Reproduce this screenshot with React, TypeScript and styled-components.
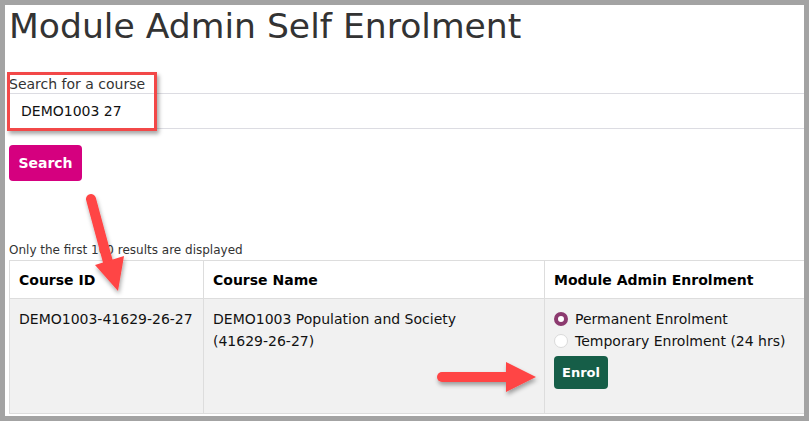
import styled, { createGlobalStyle } from 'styled-components';

const GlobalStyle = createGlobalStyle`
  html, body {
    margin: 0;
    padding: 0;
    background: #a3a3a3;
  }
  body {
    font-family: "DejaVu Sans", Verdana, sans-serif;
  }
`

const Frame = styled.div`
  width: 809px;
  height: 421px;
  box-sizing: border-box;
  padding: 5px 5px 5px 5px;
`

const Window = styled.div`
  position: relative;
  height: 411px;
  background: #ffffff;
  overflow: hidden;
  padding-left: 4px;
  box-sizing: border-box;
`

const Title = styled.h1`
  margin: 0;
  font-size: 34.6px;
  line-height: 42px;
  font-weight: normal;
  color: #333333;
`

const Label = styled.label`
  display: block;
  margin-top: 29px;
  font-size: 14px;
  line-height: 17px;
  color: #333333;
`

const SearchInput = styled.div`
  height: 36px;
  box-sizing: border-box;
  border-top: 1px solid #dcdce2;
  border-bottom: 1px solid #dcdce2;
  border-left: 1px solid #dcdce2;
  padding-left: 11px;
  display: flex;
  align-items: center;
  font-size: 14px;
  color: #111111;
`

const Button = styled.button<{ $bg: string }>`
  display: block;
  border: none;
  border-radius: 4px;
  background: ${p => p.$bg};
  color: #ffffff;
  font-family: "DejaVu Sans", Verdana, sans-serif;
  font-weight: bold;
  padding: 0;
`

const SearchButton = styled(Button)`
  margin-top: 16px;
  width: 73px;
  height: 36px;
  font-size: 14px;
`

const EnrolButton = styled(Button)`
  margin-top: 4px;
  width: 54px;
  height: 33px;
  font-size: 13px;
`

const Notice = styled.div`
  margin-top: 62px;
  font-size: 12px;
  line-height: 15px;
  color: #333333;
`

const Table = styled.table`
  margin-top: 2px;
  width: 800px;
  border-collapse: collapse;
  table-layout: fixed;
  font-size: 14px;
  color: #111111;
`

const Th = styled.th<{ $w: number }>`
  width: ${p => p.$w}px;
  height: 38px;
  box-sizing: border-box;
  padding: 0 9px;
  text-align: left;
  font-weight: bold;
  color: #000000;
  background: #ffffff;
  border: 1px solid #dddddd;
`

const Td = styled.td`
  height: 115px;
  box-sizing: border-box;
  padding: 9px 9px;
  vertical-align: top;
  line-height: 22px;
  background: #f1f1f1;
  border: 1px solid #dddddd;
`

const Code = styled.span`
  white-space: nowrap;
`

const RadioRow = styled.div`
  display: flex;
  align-items: center;
  gap: 7px;
  height: 22px;
`

const Radio = styled.span<{ $checked?: boolean }>`
  width: 14px;
  height: 14px;
  box-sizing: border-box;
  border-radius: 50%;
  background: #ffffff;
  border: ${p => (p.$checked ? '4px solid #8c3a6f' : '1px solid #dadada')};
`

const RedBox = styled.div`
  position: absolute;
  left: 2px;
  top: 67px;
  width: 150px;
  height: 59px;
  box-sizing: border-box;
  border: 3px solid #f24848;
  box-shadow: 2px 3px 4px rgba(0, 0, 0, 0.35);
  pointer-events: none;
`

const Overlay = styled.svg`
  position: absolute;
  left: -5px;
  top: -5px;
  pointer-events: none;
`

function Arrows() {
  return (
    <Overlay width="809" height="421" viewBox="0 0 809 421">
      <defs>
        <filter id="sh" x="-20%" y="-20%" width="140%" height="140%">
          <feDropShadow dx="1" dy="3" stdDeviation="2" floodColor="#000" floodOpacity="0.35" />
        </filter>
      </defs>
      <g filter="url(#sh)" fill="#ff4444" stroke="none">
        <line x1="91" y1="199" x2="108" y2="262" stroke="#ff4444" strokeWidth="10" strokeLinecap="round" />
        <polygon points="95,265 124,256 118,291" />
        <line x1="442" y1="377" x2="510" y2="377" stroke="#ff4444" strokeWidth="10" strokeLinecap="round" />
        <polygon points="506,362 536,377 506,392" />
      </g>
    </Overlay>
  );
}

export default function App() {
  return (
    <>
      <GlobalStyle />
      <Frame>
        <Window>
          <Title>Module Admin Self Enrolment</Title>
          <Label>Search for a course</Label>
          <SearchInput>DEMO1003 27</SearchInput>
          <SearchButton $bg="#d5007f">Search</SearchButton>
          <Notice>Only the first 100 results are displayed</Notice>
          <Table>
            <thead>
              <tr>
                <Th $w={194}>Course ID</Th>
                <Th $w={341}>Course Name</Th>
                <Th $w={265}>Module Admin Enrolment</Th>
              </tr>
            </thead>
            <tbody>
              <tr>
                <Td>DEMO1003-41629-26-27</Td>
                <Td>
                  DEMO1003 Population and Society <Code>(41629-26-27)</Code>
                </Td>
                <Td>
                  <RadioRow>
                    <Radio $checked />
                    Permanent Enrolment
                  </RadioRow>
                  <RadioRow>
                    <Radio />
                    Temporary Enrolment (24 hrs)
                  </RadioRow>
                  <EnrolButton $bg="#165e48">Enrol</EnrolButton>
                </Td>
              </tr>
            </tbody>
          </Table>
          <RedBox />
          <Arrows />
        </Window>
      </Frame>
    </>
  );
}
